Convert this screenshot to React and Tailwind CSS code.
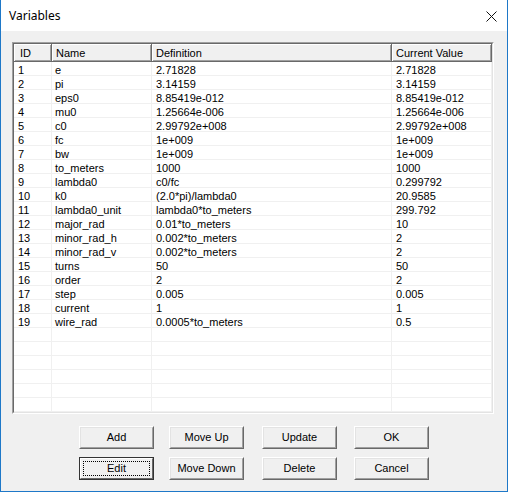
import React from "react";

const vars = [
  ["1", "e", "2.71828", "2.71828"],
  ["2", "pi", "3.14159", "3.14159"],
  ["3", "eps0", "8.85419e-012", "8.85419e-012"],
  ["4", "mu0", "1.25664e-006", "1.25664e-006"],
  ["5", "c0", "2.99792e+008", "2.99792e+008"],
  ["6", "fc", "1e+009", "1e+009"],
  ["7", "bw", "1e+009", "1e+009"],
  ["8", "to_meters", "1000", "1000"],
  ["9", "lambda0", "c0/fc", "0.299792"],
  ["10", "k0", "(2.0*pi)/lambda0", "20.9585"],
  ["11", "lambda0_unit", "lambda0*to_meters", "299.792"],
  ["12", "major_rad", "0.01*to_meters", "10"],
  ["13", "minor_rad_h", "0.002*to_meters", "2"],
  ["14", "minor_rad_v", "0.002*to_meters", "2"],
  ["15", "turns", "50", "50"],
  ["16", "order", "2", "2"],
  ["17", "step", "0.005", "0.005"],
  ["18", "current", "1", "1"],
  ["19", "wire_rad", "0.0005*to_meters", "0.5"],
];

// pad out the list with blank rows so the grid lines run to the bottom
const rows = [...vars, ...Array.from({ length: 6 }, () => ["", "", "", ""])];

const cols = [
  { name: "ID", w: "w-[38px]", hp: "pl-[6px]" },
  { name: "Name", w: "w-[100px]", hp: "pl-[4px]" },
  { name: "Definition", w: "w-[240px]", hp: "pl-[4px]" },
  { name: "Current Value", w: "w-[100px]", hp: "pl-[4px]" },
];

function Btn({ label, focused, className = "" }) {
  if (focused) {
    return (
      <div className={"w-[75px] h-[23px] border border-[#333] " + className}>
        <div className="relative h-full border border-t-white border-l-white border-b-[#696969] border-r-[#696969] bg-[#f0f0f0] flex items-center justify-center">
          <div className="absolute inset-[2px] border border-dotted border-black" />
          <span>{label}</span>
        </div>
      </div>
    );
  }
  return (
    <div className={"w-[75px] h-[23px] border border-t-white border-l-white border-b-[#696969] border-r-[#696969] " + className}>
      <div className="h-full border border-t-[#e3e3e3] border-l-[#e3e3e3] border-b-[#a0a0a0] border-r-[#a0a0a0] bg-[#f0f0f0] flex items-center justify-center">
        {label}
      </div>
    </div>
  );
}

export default function App() {
  return (
    <div className="w-[508px] h-[492px] flex flex-col border-l border-r border-b border-[#1e78c8] bg-[#f0f0f0] text-black text-[11px] font-['Liberation_Sans',Arial,sans-serif]">
      {/* title bar */}
      <div className="h-[31px] bg-white flex items-center justify-between pl-[8px] pr-[10px] shrink-0">
        <span className="text-[12px] font-['Noto_Sans','Open_Sans',sans-serif] pt-[1px]">Variables</span>
        <svg width="11" height="11" viewBox="0 0 11 11" className="mt-[1px]">
          <path d="M0.5 0.5 L10.5 10.5 M10.5 0.5 L0.5 10.5" stroke="#111" strokeWidth="1" fill="none" />
        </svg>
      </div>

      <div className="flex-1 pl-[11px] pt-[11px]">
        {/* list view */}
        <div className="w-[482px] h-[372px] border border-t-[#a0a0a0] border-l-[#a0a0a0] border-r-white border-b-white">
          <div className="h-full bg-white border border-t-[#696969] border-l-[#696969] border-r-[#e3e3e3] border-b-[#e3e3e3] overflow-hidden">
            <div className="flex h-[18px]">
              {cols.map((c) => (
                <div
                  key={c.name}
                  className={`${c.w} ${c.hp} h-[18px] bg-[#f0f0f0] border-r border-b border-[#696969] shadow-[inset_1px_1px_0_#fff,inset_-1px_-1px_0_#a0a0a0] leading-[18px] whitespace-nowrap`}
                >
                  {c.name}
                </div>
              ))}
            </div>
            {rows.map((r, i) => (
              <div key={i} className="flex h-[14px]">
                <div className="w-[38px] h-[14px] border-r border-b border-[#f0f0f0] pl-[4px] pt-[1px] leading-[14px]">{r[0]}</div>
                <div className="w-[100px] h-[14px] border-r border-b border-[#f0f0f0] pl-[3px] pt-[1px] leading-[14px] whitespace-nowrap">{r[1]}</div>
                <div className="w-[240px] h-[14px] border-r border-b border-[#f0f0f0] pl-[4px] pt-[1px] leading-[14px] whitespace-nowrap">{r[2]}</div>
                <div className="w-[100px] h-[14px] border-r border-b border-[#f0f0f0] pl-[4px] pt-[1px] leading-[14px] whitespace-nowrap">{r[3]}</div>
              </div>
            ))}
          </div>
        </div>

        {/* buttons */}
        <div className="mt-[12px] ml-[67px] flex flex-col gap-[8px]">
          <div className="flex">
            <Btn label="Add" />
            <Btn label="Move Up" className="ml-[15px]" />
            <Btn label="Update" className="ml-[18px]" />
            <Btn label="OK" className="ml-[17px]" />
          </div>
          <div className="flex">
            <Btn label="Edit" focused />
            <Btn label="Move Down" className="ml-[15px]" />
            <Btn label="Delete" className="ml-[18px]" />
            <Btn label="Cancel" className="ml-[17px]" />
          </div>
        </div>
      </div>
    </div>
  );
}
